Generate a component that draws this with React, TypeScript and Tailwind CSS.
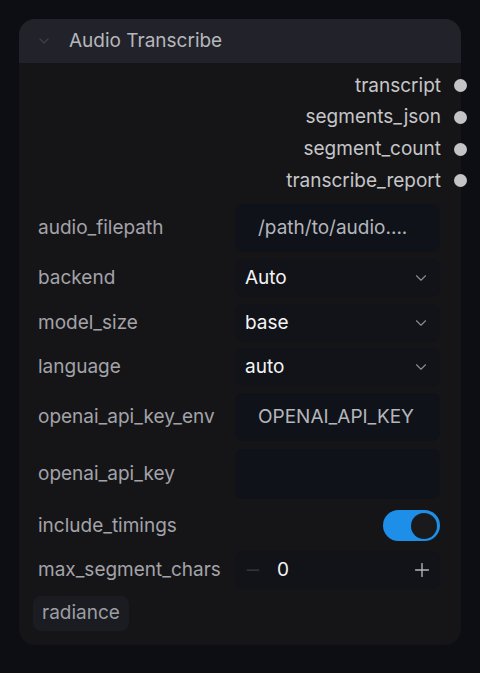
import { ChevronDown, Minus, Plus } from 'lucide-react';

const OUTPUTS = ['transcript', 'segments_json', 'segment_count', 'transcribe_report'];

function Label({ children }: { children: string }) {
  return <span className="w-[197px] shrink-0 text-[#a3a3a9]">{children}</span>;
}

function TextInput({ value, h }: { value: string; h: string }) {
  return (
    <div className={`flex flex-1 items-center rounded-lg bg-[#0f1218] pl-[23px] text-[#b4b6bc] ${h}`}>{value}</div>
  );
}

function Select({ value }: { value: string }) {
  return (
    <div className="flex h-[38px] flex-1 items-center justify-between rounded-lg bg-[#111318] pl-[10px] pr-[10px] text-[#f4f4f5]">
      <span>{value}</span>
      <ChevronDown className="h-[18px] w-[18px] text-[#8b8c92]" strokeWidth={1.5} />
    </div>
  );
}

export default function App() {
  return (
    <div
      className="min-h-[673px] w-full bg-[#0c0e13] pt-[19px] pl-[19px] text-[19px]"
      style={{ fontFamily: 'Inter, "Noto Sans", sans-serif' }}
    >
      <div className="w-[442px] rounded-2xl bg-[#151518]">
        <div className="flex h-[44px] items-center rounded-t-2xl bg-[#22232a] pl-[17px]">
          <ChevronDown className="h-4 w-4 text-[#3c3d45]" strokeWidth={2} />
          <span className="ml-[17px] text-[#b6b7bc]">Audio Transcribe</span>
        </div>

        <div className="pt-[7px]">
          {OUTPUTS.map((o) => (
            <div key={o} className="relative flex h-[31.7px] items-center justify-end pr-[20px] text-[#c6c6c9]">
              {o}
              <span className="absolute right-[-6px] h-[13px] w-[13px] rounded-full bg-[#c4c4c6]" />
            </div>
          ))}
        </div>

        <div className="flex flex-col pt-[7px] pl-[19px] pr-[21px] pb-[14px]">
          <div className="flex items-center">
            <Label>audio_filepath</Label>
            <TextInput value="/path/to/audio...." h="h-[48px]" />
          </div>
          <div className="mt-[7px] flex items-center">
            <Label>backend</Label>
            <Select value="Auto" />
          </div>
          <div className="mt-[7px] flex items-center">
            <Label>model_size</Label>
            <Select value="base" />
          </div>
          <div className="mt-[6px] flex items-center">
            <Label>language</Label>
            <Select value="auto" />
          </div>
          <div className="mt-[7px] flex items-center">
            <Label>openai_api_key_env</Label>
            <TextInput value="OPENAI_API_KEY" h="h-[48px]" />
          </div>
          <div className="mt-[8px] flex items-center">
            <Label>openai_api_key</Label>
            <TextInput value="" h="h-[50px]" />
          </div>
          <div className="mt-[8px] flex h-[38px] items-center justify-between">
            <span className="text-[#a3a3a9]">include_timings</span>
            <div className="flex h-[31px] w-[57px] items-center justify-end rounded-full bg-[#1d8fe8] pr-[3px]">
              <span className="h-[26px] w-[26px] rounded-full bg-[#1a1a1d]" />
            </div>
          </div>
          <div className="mt-[6px] flex items-center">
            <Label>max_segment_chars</Label>
            <div className="flex h-[38px] flex-1 items-center rounded-lg bg-[#111318] pl-[8px] pr-[7px]">
              <Minus className="h-5 w-5 text-[#3d3f46]" strokeWidth={1.5} />
              <span className="ml-[14px] flex-1 text-[#f4f4f5]">0</span>
              <Plus className="h-[22px] w-[22px] text-[#b4b5ba]" strokeWidth={1.5} />
            </div>
          </div>
          <div className="mt-[7px] -ml-[5px] flex">
            <span className="flex h-[35px] items-center rounded-lg bg-[#1a1c21] px-[9px] text-[#9d9ea4]">radiance</span>
          </div>
        </div>
      </div>
    </div>
  );
}
